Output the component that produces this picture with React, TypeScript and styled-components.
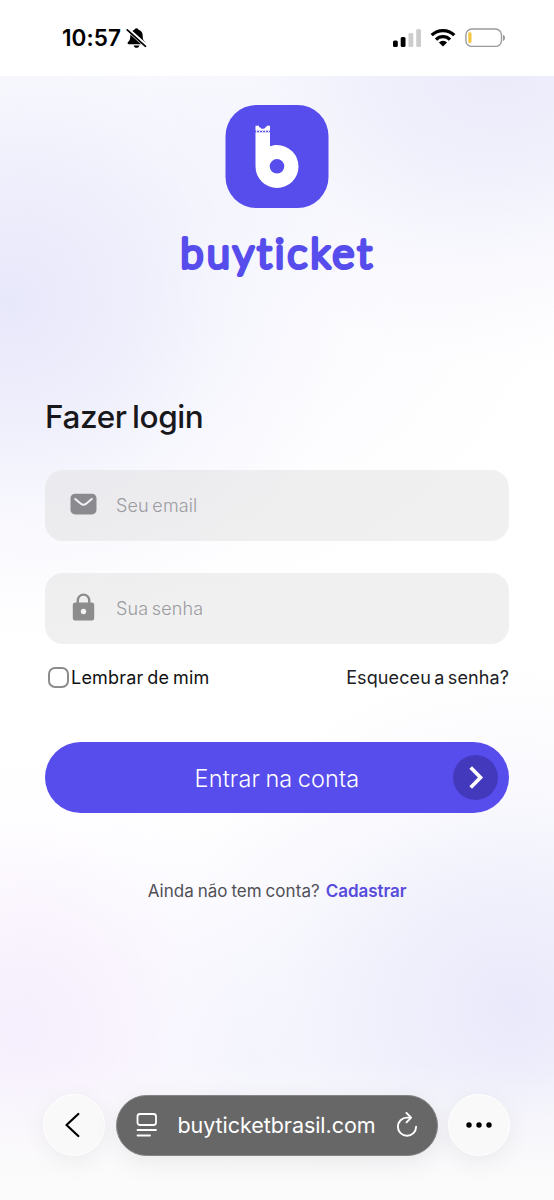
import React from "react";
import styled, { createGlobalStyle } from "styled-components";

const GlobalStyle = createGlobalStyle`
  *, *::before, *::after { box-sizing: border-box; }
  body { margin: 0; background: #fff; font-family: Inter, "Liberation Sans", sans-serif; }
  button, input { font-family: inherit; }
`;

const Screen = styled.div`
  width: 554px;
  height: 1200px;
  display: flex;
  flex-direction: column;
  overflow: hidden;
`;

const StatusBar = styled.header`
  height: 76px;
  flex: none;
  display: flex;
  align-items: flex-start;
  justify-content: space-between;
  padding: 25px 48px 0 62px;
  background: #fff;
`;

const StatusGroup = styled.div<{ $gap: number }>`
  display: flex;
  align-items: center;
  height: 25px;
  gap: ${(p) => p.$gap}px;
`;

const Clock = styled.span`
  font-size: 22.5px;
  font-weight: 600;
  letter-spacing: 0.1px;
  color: #000;
  white-space: nowrap;
`;

const Page = styled.main`
  flex: 1;
  display: flex;
  flex-direction: column;
  padding: 29px 45px 0;
  background:
    linear-gradient(to bottom, rgba(250, 250, 250, 0) 985px, rgba(250, 250, 250, 0.55) 1050px, #fbfbfb 1112px),
    radial-gradient(ellipse 340px 340px at 10px 225px, rgba(231, 231, 251, 0.95), rgba(233, 233, 251, 0.78) 28%, rgba(237, 237, 252, 0.36) 62%, rgba(240, 240, 252, 0)),
    radial-gradient(ellipse 360px 300px at 500px -10px, rgba(233, 233, 250, 0.95), rgba(235, 235, 251, 0.7) 35%, rgba(239, 239, 252, 0.3) 68%, rgba(240, 240, 252, 0)),
    radial-gradient(ellipse 350px 340px at 515px 930px, rgba(233, 233, 251, 1), rgba(235, 235, 251, 0.75) 32%, rgba(239, 239, 252, 0.34) 66%, rgba(240, 240, 252, 0)),
    radial-gradient(ellipse 240px 270px at 20px 950px, rgba(245, 238, 253, 0.95), rgba(248, 240, 253, 0.7) 40%, rgba(250, 244, 254, 0.25) 72%, rgba(250, 244, 254, 0)),
    radial-gradient(ellipse 330px 280px at 250px 990px, rgba(246, 246, 254, 1), rgba(248, 248, 254, 0)),
    radial-gradient(ellipse 420px 420px at 170px 120px, rgba(248, 248, 254, 1), rgba(250, 250, 254, 0)),
    #fff;
`;

const Brand = styled.div`
  display: flex;
  flex-direction: column;
  align-items: center;
  height: 290px;
`;

const Title = styled.h1`
  margin: 0 0 31px;
  height: 44px;
  line-height: 44px;
  font-size: 31.5px;
  font-weight: 500;
  letter-spacing: -0.4px;
  word-spacing: -2.5px;
  color: #18181c;
  white-space: nowrap;
`;

const Field = styled.label`
  height: 71px;
  margin-bottom: 32px;
  display: flex;
  align-items: center;
  gap: 18px;
  padding: 0 25px;
  border-radius: 18px;
  background: rgba(220, 220, 220, 0.42);
`;

const FieldIcon = styled.span`
  display: flex;
  width: 28px;
  flex: none;
  margin-top: -3px;
`;

const FieldInput = styled.input`
  flex: 1;
  min-width: 0;
  padding: 0;
  border: 0;
  outline: 0;
  background: none;
  font-size: 18px;
  font-weight: 300;
  letter-spacing: 0.1px;
  word-spacing: -1.5px;
  color: #333;
  &::placeholder { color: #9b9ba0; opacity: 1; }
`;

const Options = styled.div`
  height: 24px;
  margin-top: -11px;
  display: flex;
  align-items: center;
  justify-content: space-between;
  padding-left: 3px;
`;

const Remember = styled.label`
  display: flex;
  align-items: center;
  gap: 2px;
  font-size: 18px;
  letter-spacing: 0.2px;
  word-spacing: -1.5px;
  color: #111;
  white-space: nowrap;
`;

const Checkbox = styled.input`
  appearance: none;
  width: 21px;
  height: 21px;
  margin: 0;
  border: 2px solid #8c8c8c;
  border-radius: 7px;
  background: #fff;
`;

const Forgot = styled.a`
  font-size: 18px;
  letter-spacing: 0.1px;
  word-spacing: -1.8px;
  color: #202024;
  white-space: nowrap;
`;

const Submit = styled.button`
  position: relative;
  height: 71px;
  margin-top: 53px;
  flex: none;
  border: 0;
  border-radius: 36px;
  background: #574cec;
  color: #fff;
  font-size: 23.5px;
  font-weight: 300;
  letter-spacing: 0.15px;
  word-spacing: -1.5px;
  padding: 2px 0 0;
  white-space: nowrap;
`;

const SubmitArrow = styled.span`
  position: absolute;
  right: 11px;
  top: 13px;
  width: 45px;
  height: 45px;
  border-radius: 50%;
  display: flex;
  align-items: center;
  justify-content: center;
  background: #4339bd;
`;

const SignUp = styled.p`
  margin: 66px 0 0;
  height: 24px;
  line-height: 24px;
  display: flex;
  justify-content: center;
  gap: 6px;
  font-size: 17px;
  letter-spacing: 0.05px;
  word-spacing: -1px;
  color: #505056;
  white-space: nowrap;
`;

const SignUpLink = styled.a`
  font-weight: 600;
  letter-spacing: -0.05px;
  color: #574cdb;
`;

const BrowserBar = styled.nav`
  margin: auto -1px 44px -2px;
  display: flex;
  align-items: center;
  justify-content: space-between;
`;

const RoundButton = styled.button`
  width: 62px;
  height: 62px;
  padding: 0;
  border: 1px solid #fff;
  border-radius: 50%;
  display: flex;
  align-items: center;
  justify-content: center;
  background: #f9f9fa;
  box-shadow: 0 6px 24px rgba(0, 0, 0, 0.06);
`;

const AddressBar = styled.div`
  width: 322px;
  height: 61px;
  display: flex;
  align-items: center;
  padding: 0 19px 0 19px;
  border: 1px solid #858585;
  border-radius: 31px;
  background: #676768;
  box-shadow: 0 6px 26px rgba(0, 0, 0, 0.07);
`;

const Address = styled.span`
  flex: 1;
  text-align: center;
  font-size: 21.5px;
  letter-spacing: -0.05px;
  color: #fff;
  white-space: nowrap;
`;

const MutedBell = () => (
  <svg width="21" height="22" viewBox="0 0 21 22">
    <path d="M10.500 1.200c-1.200 0-1.900.8-2.100 1.600C5.500 3.700 4.300 6 4.300 8.800c0 3.600-.7 4.700-2.300 6.300-.8.9-.4 2.100.8 2.100h15.400c1.200 0 1.600-1.200.8-2.100-1.600-1.600-2.300-2.700-2.300-6.300 0-2.800-1.200-5.100-4.100-6-.2-.8-.9-1.600-2.100-1.600z" fill="#000" />
    <path d="M7.600 18.500h5.800c-.4 1.500-1.500 2.300-2.900 2.300s-2.500-.8-2.900-2.300z" fill="#000" />
    <path d="M1.500 2.300l18.300 16.500" stroke="#fff" strokeWidth="4.200" />
    <path d="M1.200 2.800l18.300 16.500" stroke="#000" strokeWidth="1.700" strokeLinecap="round" />
  </svg>
);

const Signal = () => (
  <svg width="28" height="20" viewBox="0 0 28 20">
    <rect x="0" y="12.500" width="4.800" height="6.500" rx="1.500" fill="#000" />
    <rect x="7.700" y="9" width="4.800" height="10" rx="1.500" fill="#000" />
    <rect x="15.500" y="5" width="4.800" height="14" rx="1.500" fill="#cdcdcd" />
    <rect x="23.200" y="1" width="4.800" height="18" rx="1.500" fill="#cdcdcd" />
  </svg>
);

const Wifi = () => (
  <svg width="26" height="19" viewBox="0 0 26 19">
    <g fill="none" stroke="#000" strokeWidth="3.300">
      <path d="M1.700 7.200a16 16 0 0 1 22.600 0" />
      <path d="M6 11.600a9.900 9.900 0 0 1 14 0" />
    </g>
    <path d="M13 18.500l-4.100-4.100a5.800 5.800 0 0 1 8.200 0z" fill="#000" />
  </svg>
);

const Battery = () => (
  <svg width="41" height="20" viewBox="0 0 41 20">
    <rect x=".9" y="1" width="35.600" height="17.400" rx="6" fill="#fff" stroke="#9b9b9b" strokeWidth="1.400" />
    <rect x="3.300" y="4.300" width="3.200" height="10.800" rx="1.400" fill="#f3c63f" />
    <path d="M38 6.700c2.700.8 2.700 5.400 0 6.200z" fill="#999" />
  </svg>
);

const Wordmark = styled.text`
  font-family: Lato, sans-serif;
  font-size: 41.5px;
  font-weight: 300;
  font-variant-ligatures: none;
  fill: #574cec;
  stroke: #574cec;
  stroke-width: 4.2px;
  stroke-linejoin: round;
`;

const Logo = () => (
  <svg width="200" height="184" viewBox="0 0 200 184">
    <rect x="48.500" y="0" width="103" height="103" rx="31" fill="#574cec" />
    <path fill="#fff" fillRule="evenodd" d="M78.500 27.200H93V41.200C96 40.300 97.800 40 100 40A21.500 21.500 0 1 1 78.500 61.500ZM100 54a7.300 7.300 0 1 0 0 14.600a7.300 7.300 0 0 0 0-14.600Z" />
    <path fill="#fff" d="M78.500 20.800h3.500v1.500h1.200c.6 2 4.500 2 5.100 0h1.200v-1.500H93v5H78.500z" />
    <path d="M79 26.500h14" stroke="#fff" strokeWidth="1" strokeDasharray="1 2" />
    <Wordmark x="3.600" y="163" textLength="191" lengthAdjust="spacing">
      buyticket
    </Wordmark>
  </svg>
);

const Mail = () => (
  <svg width="27" height="22" viewBox="0 0 27 22">
    <rect x=".5" y=".8" width="26" height="20.600" rx="4.500" fill="#8b8b8f" />
    <path d="M5.200 6l5.700 4.700c1.500 1.200 3.700 1.200 5.200 0L21.800 6" fill="none" stroke="#f2f2f4" strokeWidth="2" strokeLinecap="round" />
  </svg>
);

const Lock = () => (
  <svg width="27" height="28" viewBox="0 0 27 28">
    <path d="M7.800 11V7.300a5.700 5.700 0 0 1 11.400 0V11" fill="none" stroke="#8c8c8c" strokeWidth="2.400" />
    <rect x="2.800" y="9.500" width="21.400" height="18" rx="2.500" fill="#8c8c8c" />
    <circle cx="13.500" cy="18.500" r="2.700" fill="#f3f3f3" />
  </svg>
);

const Chevron = () => (
  <svg width="20" height="26" viewBox="0 0 20 26">
    <path d="M4.700 2.500l9.800 10-9.800 10" fill="none" stroke="#fff" strokeWidth="3.700" />
  </svg>
);

const Back = () => (
  <svg width="18" height="26" viewBox="0 0 18 26">
    <path d="M13.300 2L1.500 13l11.800 11" fill="none" stroke="#000" strokeWidth="2.200" strokeLinecap="round" strokeLinejoin="round" />
  </svg>
);

const Reader = () => (
  <svg width="22" height="26" viewBox="0 0 22 26" fill="none" stroke="#fff" strokeWidth="1.800" strokeLinecap="round">
    <rect x="1.500" y="2" width="18.500" height="11" rx="2.500" />
    <path d="M1.500 18h18.500M1.500 23.500h12.500" />
  </svg>
);

const Reload = () => (
  <svg width="22" height="26" viewBox="0 0 22 26" fill="none" stroke="#fff" strokeWidth="1.900" strokeLinecap="round" strokeLinejoin="round">
    <path d="M14.500 5.600H11a9.100 9.100 0 1 0 9.100 9.100" />
    <path d="M10.500 1l4.600 4.600-4.600 4.700" />
  </svg>
);

const Dots = () => (
  <svg width="28" height="8" viewBox="0 0 28 8">
    <circle cx="4" cy="4" r="2.700" />
    <circle cx="14" cy="4" r="2.700" />
    <circle cx="24" cy="4" r="2.700" />
  </svg>
);

export default function App() {
  return (
    <Screen>
      <GlobalStyle />
      <StatusBar>
        <StatusGroup $gap={5}>
          <Clock>10:57</Clock>
          <MutedBell />
        </StatusGroup>
        <StatusGroup $gap={9}>
          <Signal />
          <Wifi />
          <Battery />
        </StatusGroup>
      </StatusBar>
      <Page>
        <Brand>
          <Logo />
        </Brand>
        <Title>Fazer login</Title>
        <Field>
          <FieldIcon><Mail /></FieldIcon>
          <FieldInput type="email" placeholder="Seu email" />
        </Field>
        <Field>
          <FieldIcon><Lock /></FieldIcon>
          <FieldInput type="password" placeholder="Sua senha" />
        </Field>
        <Options>
          <Remember>
            <Checkbox type="checkbox" />
            Lembrar de mim
          </Remember>
          <Forgot>Esqueceu a senha?</Forgot>
        </Options>
        <Submit type="button">
          Entrar na conta
          <SubmitArrow><Chevron /></SubmitArrow>
        </Submit>
        <SignUp>
          Ainda não tem conta?
          <SignUpLink>Cadastrar</SignUpLink>
        </SignUp>
        <BrowserBar>
          <RoundButton aria-label="Voltar"><Back /></RoundButton>
          <AddressBar>
            <Reader />
            <Address>buyticketbrasil.com</Address>
            <Reload />
          </AddressBar>
          <RoundButton aria-label="Mais"><Dots /></RoundButton>
        </BrowserBar>
      </Page>
    </Screen>
  );
}
